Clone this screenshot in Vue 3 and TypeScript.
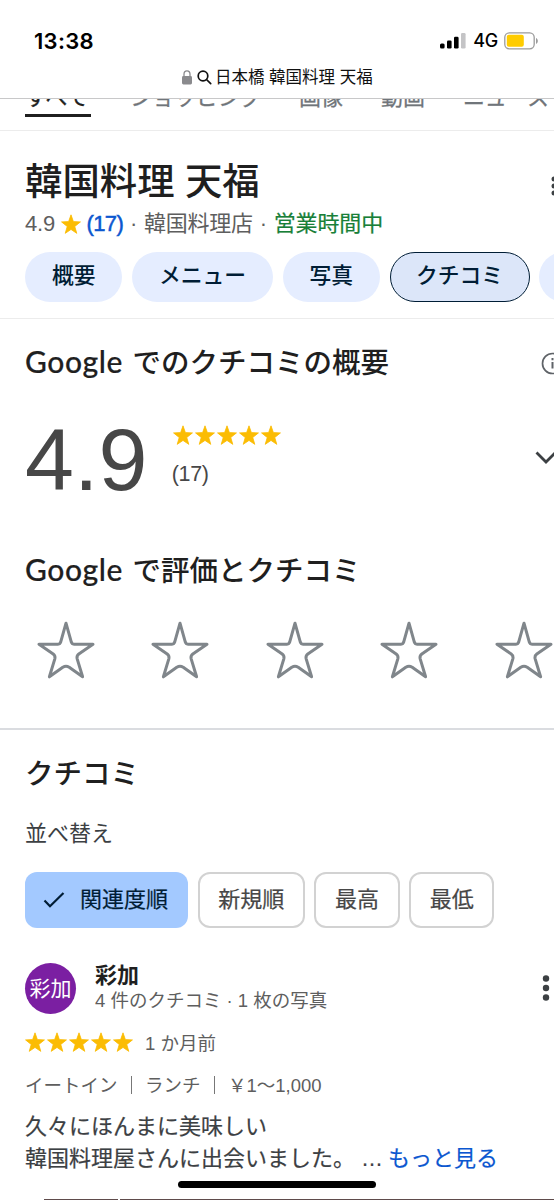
<template>
  <div class="screen">
    <header class="browser">
      <div class="status">
        <span class="time">13:38</span>
        <div class="status-icons">
          <svg class="signal" width="26" height="16" viewBox="0 0 26 16">
            <rect x="0" y="10.5" width="4.6" height="5" rx="1.5" />
            <rect x="7" y="7.5" width="4.6" height="8" rx="1.3" />
            <rect x="14" y="3.8" width="4.6" height="11.7" rx="1.3" />
            <rect x="21" y="0" width="4.6" height="15.5" rx="1.3" fill="#c4c4c6" />
          </svg>
          <span class="network">4G</span>
          <svg width="34" height="18" viewBox="0 0 34 18">
            <rect x="0.8" y="0.8" width="29.4" height="16" rx="4.5" fill="none" stroke="#9b9b9b" stroke-width="1.3" />
            <rect x="2.8" y="2.8" width="17" height="12" rx="2" fill="#fc0" />
            <path d="M32 6c2.4.8 2.4 5 0 5.8z" fill="#9b9b9b" />
          </svg>
        </div>
      </div>
      <div class="address">
        <svg class="lock" width="10" height="15" viewBox="0 0 10 15">
          <rect x="0" y="6" width="10" height="8.5" rx="1.4" fill="#8a8a8d" />
          <path d="M2 7V4.2a3 3.3 0 0 1 6 0V7" fill="none" stroke="#8a8a8d" stroke-width="1.3" />
        </svg>
        <svg class="search" width="15" height="15" viewBox="0 0 15 15" fill="none" stroke="#111" stroke-width="1.7">
          <circle cx="6" cy="6" r="4.8" />
          <path d="M9.5 9.5l4.2 4.2" stroke-linecap="round" />
        </svg>
        <span>日本橋 韓国料理 天福</span>
      </div>
    </header>

    <nav class="tabs">
      <span v-for="tab in tabs" :key="tab" class="tab" :class="{ current: tab === 'すべて' }">{{ tab }}</span>
    </nav>

    <section class="place">
      <div class="title-row">
        <h1>韓国料理 天福</h1>
        <svg class="more-small" width="6" height="20" viewBox="0 0 6 20" fill="#3c4043">
          <circle v-for="y in [3, 10, 17]" :key="y" cx="3" :cy="y" r="2.5" />
        </svg>
      </div>
      <div class="facts">
        <span class="score">4.9</span>
        <svg class="fact-star" width="22" height="22" viewBox="0 0 24 24" fill="#fbbc04"><path :d="starPath" /></svg>
        <span class="count">(17)</span>
        <span class="dot">·</span>
        <span class="kind">韓国料理店</span>
        <span class="dot">·</span>
        <span class="open">営業時間中</span>
      </div>
      <div class="chips">
        <span v-for="chip in chips" :key="chip" class="chip" :class="{ active: chip === 'クチコミ' }">{{ chip }}</span>
        <span class="chip" />
      </div>
    </section>

    <section class="overview">
      <div class="heading-row">
        <h2><span class="brand">Google</span> でのクチコミの概要</h2>
        <svg class="info" width="23" height="23" viewBox="0 0 23 23" fill="none" stroke="#5f6368">
          <circle cx="11.5" cy="11.5" r="10" stroke-width="1.7" />
          <path d="M11.5 10v6.5M11.5 6v2.2" stroke-width="2" />
        </svg>
      </div>
      <div class="summary">
        <span class="big-score">4.9</span>
        <div class="summary-side">
          <div class="stars">
            <svg v-for="n in 5" :key="n" width="22" height="22" viewBox="0 0 24 24"><path :d="starPath" /></svg>
          </div>
          <span class="summary-count">(17)</span>
        </div>
        <svg class="chevron" width="22" height="16" viewBox="0 0 22 16">
          <path d="M1.5 2.5L11 12l9.5-9.5" fill="none" stroke="#3c4043" stroke-width="2.8" />
        </svg>
      </div>
      <h2 class="rate-heading"><span class="brand">Google</span> で評価とクチコミ</h2>
      <div class="rate-stars">
        <svg v-for="n in 5" :key="n" width="60" height="60" viewBox="0 0 60 60">
          <path d="M30 3.2L35.4 22.3Q36.2 24.2 38 24.2H57L42.8 34Q40.5 35.7 41.1 38.6L46.6 56.8L33.2 47.2Q30 45.3 26.8 47.2L13.4 56.8L18.9 38.6Q19.5 35.7 17.2 34L3 24.2H22Q23.8 24.2 24.6 22.3Z" />
        </svg>
      </div>
    </section>

    <section class="reviews">
      <h2>クチコミ</h2>
      <div class="sort-label">並べ替え</div>
      <div class="sorts">
        <span v-for="(sort, index) in sorts" :key="sort" class="sort" :class="{ selected: index === 0 }">
          <svg v-if="index === 0" width="22" height="18" viewBox="0 0 22 18">
            <path d="M1.5 9.5L7 15.3L20.5 2" fill="none" stroke="#001d35" stroke-width="2.2" />
          </svg>
          {{ sort }}
        </span>
      </div>

      <article class="review">
        <div class="author">
          <span class="avatar">彩加</span>
          <div class="author-text">
            <div class="name">彩加</div>
            <div class="author-meta">4 件のクチコミ · 1 枚の写真</div>
          </div>
          <svg class="more" width="8" height="26" viewBox="0 0 8 26" fill="#3c4043">
            <circle v-for="y in [3.5, 13, 22.5]" :key="y" cx="4" :cy="y" r="3.2" />
          </svg>
        </div>
        <div class="review-rating">
          <div class="stars">
            <svg v-for="n in 5" :key="n" width="22" height="22" viewBox="0 0 24 24"><path :d="starPath" /></svg>
          </div>
          <span class="date">1 か月前</span>
        </div>
        <div class="visit">
          <span>イートイン</span><i /><span>ランチ</span><i /><span>￥1〜1,000</span>
        </div>
        <p class="body">久々にほんまに美味しい<br />韓国料理屋さんに出会いました。<span class="ellipsis">…</span><a>もっと見る</a></p>
        <div class="photos"><span /><span /></div>
      </article>
    </section>
    <div class="home-indicator" />
  </div>
</template>

<script setup lang="ts">
const tabs: string[] = ['すべて', 'ショッピング', '画像', '動画', 'ニュース']
const chips: string[] = ['概要', 'メニュー', '写真', 'クチコミ']
const sorts: string[] = ['関連度順', '新規順', '最高', '最低']

const starPath = 'M12 17.9L18.3 22.2L16.1 14.7L22.3 9.7L14.6 9.4L12 2L9.4 9.4L1.7 9.7L7.9 14.7L5.7 22.2Z'
</script>

<style>
body {
  margin: 0;
  background: #fff;
}
</style>

<style scoped>
.screen {
  position: relative;
  width: 554px;
  height: 1200px;
  overflow: hidden;
  background: #fff;
  color: #1f1f1f;
  font-family: "Liberation Sans", "Noto Sans CJK JP", sans-serif;
  font-size: 22px;
  white-space: nowrap;
}

svg {
  display: block;
  flex: none;
}

.browser {
  position: relative;
  z-index: 1;
  box-sizing: border-box;
  height: 99px;
  background: #fff;
  border-bottom: 1px solid #c8c8c9;
}

.status {
  display: flex;
  justify-content: space-between;
  box-sizing: border-box;
  height: 62px;
  padding: 29px 16px 0 34px;
}

.time {
  font: 600 22px/24px Inter, sans-serif;
  letter-spacing: 0.3px;
  color: #000;
}

.status-icons {
  display: flex;
  align-items: center;
  height: 24px;
}

.network {
  margin: 0 6px 0 7px;
  font: 500 18px/24px Inter, sans-serif;
  letter-spacing: -0.3px;
  color: #000;
}

.address {
  display: flex;
  align-items: center;
  height: 30px;
  padding-left: 182px;
  font-size: 16.5px;
  line-height: 30px;
  color: #111;
}

.search {
  margin: 0 3px 0 5px;
}

.tabs {
  display: flex;
  box-sizing: border-box;
  height: 32px;
  padding-left: 25px;
  border-bottom: 1px solid #ececec;
  color: #70757a;
  font-size: 22px;
  line-height: 26px;
}

.tab {
  flex: none;
  height: 32px;
  margin: -14px 38px 0 0;
  -webkit-text-stroke: 0.3px currentColor;
}

.tab:nth-child(2) {
  margin-right: 37px;
}

.tab:last-child {
  margin-right: 0;
  letter-spacing: -0.3px;
}

.tab.current {
  box-sizing: border-box;
  width: 66px;
  margin-right: 39px;
  border-bottom: 3px solid #1f1f1f;
  color: #1f1f1f;
}

.place {
  box-sizing: border-box;
  height: 188px;
  padding-left: 25px;
  border-bottom: 1px solid #ececec;
}

.title-row {
  display: flex;
  justify-content: space-between;
  height: 74px;
  padding-top: 2px;
}

h1 {
  margin: 25px 0 0;
  font-size: 37.4px;
  font-weight: 500;
  line-height: 48px;
}

.more-small {
  margin: 43px -2.5px 0 0;
}

.facts {
  display: flex;
  align-items: center;
  height: 34px;
  line-height: 34px;
  color: #5e5e5e;
}

.score {
  letter-spacing: -0.2px;
}

.fact-star {
  margin: 0 4.5px 0 5px;
}

.count {
  color: #0b57d0;
  letter-spacing: -0.6px;
  -webkit-text-stroke: 0.5px currentColor;
}

.kind {
  letter-spacing: -0.2px;
}

.dot {
  margin: 0 6.7px;
}

.open {
  color: #188038;
  letter-spacing: -0.1px;
  -webkit-text-stroke: 0.2px currentColor;
}

.chips {
  display: flex;
  gap: 9.6px;
  margin-top: 11px;
}

.chip {
  box-sizing: border-box;
  flex: none;
  min-width: 60px;
  height: 50px;
  padding: 0 26.9px;
  border-radius: 25px;
  background: #e5edff;
  color: #001d35;
  font-size: 21.8px;
  font-weight: 500;
  line-height: 47px;
}

.chip.active {
  padding: 0 25.4px;
  border: 1.5px solid #001d35;
  background: #dce6f9;
  line-height: 45px;
}

.overview {
  box-sizing: border-box;
  height: 411px;
  border-bottom: 2px solid #dadce0;
}

h2 {
  margin: 0;
  font-size: 28.5px;
  font-weight: 500;
  line-height: 40px;
}

.brand {
  margin-right: 1.5px;
  font-family: Lato, sans-serif;
  font-size: 30px;
  letter-spacing: 0.6px;
  line-height: 1;
  -webkit-text-stroke: 0.2px currentColor;
}

.heading-row {
  display: flex;
  justify-content: space-between;
  padding: 24px 0 0 25px;
}

.info {
  margin: 9px -10px 0 0;
}

.summary {
  box-sizing: border-box;
  display: flex;
  height: 153px;
  padding: 41px 0 0 25px;
}

.big-score {
  font-size: 88px;
  line-height: 112px;
  margin-top: -20px;
  color: #474747;
}

.summary-side {
  margin: 0 auto 0 24.5px;
}

.stars {
  display: flex;
  fill: #fbbc04;
}

.stars path,
.fact-star path {
  stroke: #fbbc04;
  stroke-width: 0.9;
  stroke-linejoin: round;
}

.summary-count {
  display: block;
  margin-top: 12px;
  color: #474747;
  font-size: 21.5px;
  letter-spacing: -0.4px;
  line-height: 32px;
}

.chevron {
  margin: 26px -3px 0 0;
}

.rate-heading {
  margin: 15px 0 0 25px;
}

.rate-stars {
  display: flex;
  gap: 54.4px;
  margin: 29px 0 0 36px;
}

.rate-stars path {
  fill: none;
  stroke: #80868b;
  stroke-width: 3;
  stroke-linejoin: round;
}

.reviews {
  padding: 24px 0 0 25px;
}

.sort-label {
  margin-top: 23px;
  color: #3c4043;
  line-height: 34px;
}

.sorts {
  display: flex;
  gap: 9.6px;
  margin-top: 21px;
}

.sort {
  display: flex;
  align-items: center;
  box-sizing: border-box;
  flex: none;
  height: 56px;
  padding: 0 18.6px 7px;
  border: 2px solid #d2d2d2;
  border-radius: 12px;
  color: #474747;
  -webkit-text-stroke: 0.2px currentColor;
}

.sort.selected {
  padding: 0 20px 7px 18px;
  border: 0;
  background: #a3c9ff;
  color: #001d35;
}

.sort svg {
  margin: 7px 15px 0 0;
}

.author {
  display: flex;
  height: 52px;
  margin-top: 35px;
}

.avatar {
  width: 51px;
  height: 51px;
  border-radius: 50%;
  background: #7b1fa2;
  color: #fff;
  font-size: 21px;
  line-height: 52px;
  text-align: center;
}

.author-text {
  margin-left: 19px;
}

.name {
  font-weight: 700;
  line-height: 26px;
}

.author-meta {
  color: #5e5e5e;
  font-size: 18.5px;
  line-height: 24px;
}

.more {
  margin: 12px 4.5px 0 auto;
}

.review-rating {
  display: flex;
  align-items: center;
  height: 28px;
  margin-top: 13px;
  color: #5e5e5e;
  font-size: 18.5px;
}

.review-rating .stars {
  margin-left: -1px;
}

.date {
  margin-left: 11px;
}

.visit {
  display: flex;
  align-items: center;
  height: 30px;
  margin-top: 13px;
  color: #5e5e5e;
  font-size: 18.5px;
}

.visit i {
  width: 1.5px;
  height: 18px;
  margin: 2px 13px 0;
  background: #777;
}

.body {
  margin: 12px 0 0;
  color: #3c4043;
  line-height: 32px;
  -webkit-text-stroke: 0.2px currentColor;
}

.body a {
  color: #0b57d0;
}

.ellipsis {
  margin: 0 5px 0 6px;
}

.photos {
  display: flex;
  gap: 2px;
  margin: 24px 0 0 19px;
}

.photos span {
  width: 74px;
  height: 4px;
  background: #5e4b4b;
}

.photos span:last-child {
  flex: 1;
}

.home-indicator {
  position: absolute;
  left: 178px;
  top: 1181px;
  width: 198px;
  height: 7px;
  border-radius: 4px;
  background: #000;
}
</style>
